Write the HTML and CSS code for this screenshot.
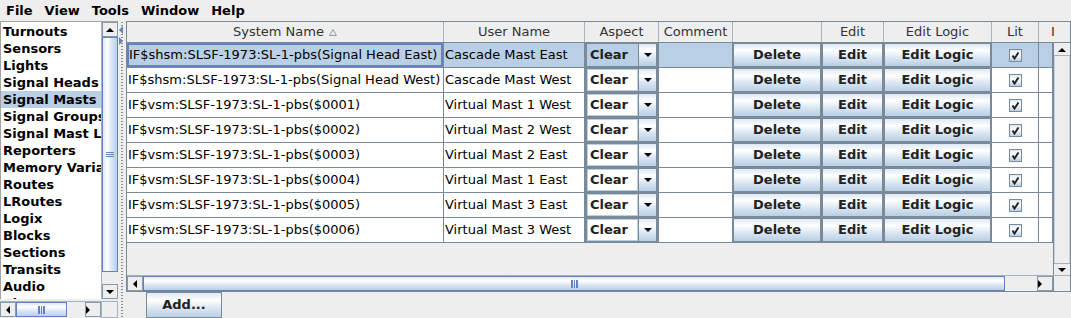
FILE: index.html
```html
<!DOCTYPE html>
<html>
<head>
<meta charset="utf-8">
<link rel="stylesheet" href="styles.css">
</head>
<body>
<div class="menubar">
  <span class="menu m-file">File</span>
  <span class="menu">View</span>
  <span class="menu">Tools</span>
  <span class="menu">Window</span>
  <span class="menu">Help</span>
</div>
<div class="main">
  <div class="left">
    <div class="left-top">
      <div class="list">
        <div class="item">Turnouts</div>
        <div class="item">Sensors</div>
        <div class="item">Lights</div>
        <div class="item">Signal Heads</div>
        <div class="item sel">Signal Masts</div>
        <div class="item">Signal Groups</div>
        <div class="item">Signal Mast Logic</div>
        <div class="item">Reporters</div>
        <div class="item">Memory Variables</div>
        <div class="item">Routes</div>
        <div class="item">LRoutes</div>
        <div class="item">Logix</div>
        <div class="item">Blocks</div>
        <div class="item">Sections</div>
        <div class="item">Transits</div>
        <div class="item">Audio</div>
        <div class="item">IdTags</div>
      </div>
      <div class="vbar">
        <div class="arrbtn"><span class="tri up"></span></div>
        <div class="vthumb"><span class="grip-h"></span></div>
        <div class="vtrack"></div>
        <div class="arrbtn"><span class="tri down"></span></div>
      </div>
    </div>
    <div class="left-bottom">
      <div class="hbar small">
        <div class="arrbtn h"><span class="tri left"></span></div>
        <div class="hthumb w50"><span class="grip-v"></span></div>
        <div class="htrack"></div>
        <div class="arrbtn h"><span class="tri right"></span></div>
      </div>
      <div class="corner"></div>
    </div>
  </div>
  <div class="splitter">
    <span class="sp-arrow sp-left"></span>
    <span class="sp-arrow sp-right"></span>
  </div>
  <div class="right">
    <div class="pane">
      <div class="hdr">
        <div class="hc">System Name <svg class="sort" width="8" height="7" viewBox="0 0 8 7"><path d="M4 0.5 L7.5 6.5 L0.5 6.5 Z" fill="none" stroke="#9a9a9a" stroke-width="1"/></svg></div>
        <div class="hc">User Name</div>
        <div class="hc">Aspect</div>
        <div class="hc">Comment</div>
        <div class="hc"></div>
        <div class="hc">Edit</div>
        <div class="hc">Edit Logic</div>
        <div class="hc">Lit</div>
        <div class="hc last">I</div>
      </div>
      <div class="mid">
        <div class="viewport">
          <div class="row selrow">
            <div class="c t focus">IF$shsm:SLSF-1973:SL-1-pbs(Signal Head East)</div>
            <div class="c t">Cascade Mast East</div>
            <div class="c"><div class="combo"><div class="ctext">Clear</div><div class="cbtn"><span class="tri down"></span></div></div></div>
            <div class="c"></div>
            <div class="c"><div class="btn">Delete</div></div>
            <div class="c"><div class="btn">Edit</div></div>
            <div class="c"><div class="btn">Edit Logic</div></div>
            <div class="c ck"><span class="box"><svg width="9" height="9" viewBox="0 0 9 9"><path d="M1.5 4.5 L3.5 7.5 L7.5 1.5" fill="none" stroke="#222" stroke-width="2"/></svg></span></div>
            <div class="c"></div>
          </div>
          <div class="row">
            <div class="c t">IF$shsm:SLSF-1973:SL-1-pbs(Signal Head West)</div>
            <div class="c t">Cascade Mast West</div>
            <div class="c"><div class="combo"><div class="ctext">Clear</div><div class="cbtn"><span class="tri down"></span></div></div></div>
            <div class="c"></div>
            <div class="c"><div class="btn">Delete</div></div>
            <div class="c"><div class="btn">Edit</div></div>
            <div class="c"><div class="btn">Edit Logic</div></div>
            <div class="c ck"><span class="box"><svg width="9" height="9" viewBox="0 0 9 9"><path d="M1.5 4.5 L3.5 7.5 L7.5 1.5" fill="none" stroke="#222" stroke-width="2"/></svg></span></div>
            <div class="c"></div>
          </div>
          <div class="row">
            <div class="c t">IF$vsm:SLSF-1973:SL-1-pbs($0001)</div>
            <div class="c t">Virtual Mast 1 West</div>
            <div class="c"><div class="combo"><div class="ctext">Clear</div><div class="cbtn"><span class="tri down"></span></div></div></div>
            <div class="c"></div>
            <div class="c"><div class="btn">Delete</div></div>
            <div class="c"><div class="btn">Edit</div></div>
            <div class="c"><div class="btn">Edit Logic</div></div>
            <div class="c ck"><span class="box"><svg width="9" height="9" viewBox="0 0 9 9"><path d="M1.5 4.5 L3.5 7.5 L7.5 1.5" fill="none" stroke="#222" stroke-width="2"/></svg></span></div>
            <div class="c"></div>
          </div>
          <div class="row">
            <div class="c t">IF$vsm:SLSF-1973:SL-1-pbs($0002)</div>
            <div class="c t">Virtual Mast 2 West</div>
            <div class="c"><div class="combo"><div class="ctext">Clear</div><div class="cbtn"><span class="tri down"></span></div></div></div>
            <div class="c"></div>
            <div class="c"><div class="btn">Delete</div></div>
            <div class="c"><div class="btn">Edit</div></div>
            <div class="c"><div class="btn">Edit Logic</div></div>
            <div class="c ck"><span class="box"><svg width="9" height="9" viewBox="0 0 9 9"><path d="M1.5 4.5 L3.5 7.5 L7.5 1.5" fill="none" stroke="#222" stroke-width="2"/></svg></span></div>
            <div class="c"></div>
          </div>
          <div class="row">
            <div class="c t">IF$vsm:SLSF-1973:SL-1-pbs($0003)</div>
            <div class="c t">Virtual Mast 2 East</div>
            <div class="c"><div class="combo"><div class="ctext">Clear</div><div class="cbtn"><span class="tri down"></span></div></div></div>
            <div class="c"></div>
            <div class="c"><div class="btn">Delete</div></div>
            <div class="c"><div class="btn">Edit</div></div>
            <div class="c"><div class="btn">Edit Logic</div></div>
            <div class="c ck"><span class="box"><svg width="9" height="9" viewBox="0 0 9 9"><path d="M1.5 4.5 L3.5 7.5 L7.5 1.5" fill="none" stroke="#222" stroke-width="2"/></svg></span></div>
            <div class="c"></div>
          </div>
          <div class="row">
            <div class="c t">IF$vsm:SLSF-1973:SL-1-pbs($0004)</div>
            <div class="c t">Virtual Mast 1 East</div>
            <div class="c"><div class="combo"><div class="ctext">Clear</div><div class="cbtn"><span class="tri down"></span></div></div></div>
            <div class="c"></div>
            <div class="c"><div class="btn">Delete</div></div>
            <div class="c"><div class="btn">Edit</div></div>
            <div class="c"><div class="btn">Edit Logic</div></div>
            <div class="c ck"><span class="box"><svg width="9" height="9" viewBox="0 0 9 9"><path d="M1.5 4.5 L3.5 7.5 L7.5 1.5" fill="none" stroke="#222" stroke-width="2"/></svg></span></div>
            <div class="c"></div>
          </div>
          <div class="row">
            <div class="c t">IF$vsm:SLSF-1973:SL-1-pbs($0005)</div>
            <div class="c t">Virtual Mast 3 East</div>
            <div class="c"><div class="combo"><div class="ctext">Clear</div><div class="cbtn"><span class="tri down"></span></div></div></div>
            <div class="c"></div>
            <div class="c"><div class="btn">Delete</div></div>
            <div class="c"><div class="btn">Edit</div></div>
            <div class="c"><div class="btn">Edit Logic</div></div>
            <div class="c ck"><span class="box"><svg width="9" height="9" viewBox="0 0 9 9"><path d="M1.5 4.5 L3.5 7.5 L7.5 1.5" fill="none" stroke="#222" stroke-width="2"/></svg></span></div>
            <div class="c"></div>
          </div>
          <div class="row">
            <div class="c t">IF$vsm:SLSF-1973:SL-1-pbs($0006)</div>
            <div class="c t">Virtual Mast 3 West</div>
            <div class="c"><div class="combo"><div class="ctext">Clear</div><div class="cbtn"><span class="tri down"></span></div></div></div>
            <div class="c"></div>
            <div class="c"><div class="btn">Delete</div></div>
            <div class="c"><div class="btn">Edit</div></div>
            <div class="c"><div class="btn">Edit Logic</div></div>
            <div class="c ck"><span class="box"><svg width="9" height="9" viewBox="0 0 9 9"><path d="M1.5 4.5 L3.5 7.5 L7.5 1.5" fill="none" stroke="#222" stroke-width="2"/></svg></span></div>
            <div class="c"></div>
          </div>
        </div>
        <div class="vbar tbl">
          <div class="arrbtn"><span class="tri up"></span></div>
          <div class="vtrack"></div>
          <div class="arrbtn"><span class="tri down"></span></div>
        </div>
      </div>
      <div class="hrow">
        <div class="hbar big">
          <div class="arrbtn h"><span class="tri left"></span></div>
          <div class="hthumb wbig"><span class="grip-v"></span></div>
          <div class="htrack"></div>
          <div class="arrbtn h"><span class="tri right"></span></div>
        </div>
        <div class="corner tcorner"></div>
      </div>
    </div>
    <div class="actions">
      <div class="btn add">Add...</div>
    </div>
  </div>
</div>
</body>
</html>
```

FILE: styles.css
```css
html, body {
  margin: 0;
  padding: 0;
  background: #eeeeee;
  font-family: "DejaVu Sans", sans-serif;
  font-size: 13px;
  color: #000;
  overflow: hidden;
}
body { width: 1071px; height: 318px; }

.menubar {
  height: 21px;
  display: flex;
  align-items: center;
  font-weight: bold;
  padding-left: 6px;
  gap: 12px;
  box-sizing: border-box;
}
.menu { line-height: 19px; }

.main {
  display: flex;
  height: 297px;
}

.left {
  width: 118px;
  display: flex;
  flex-direction: column;
  border-top: 1px solid #a3a3a3;
  box-sizing: border-box;
}
.left-top {
  display: flex;
  height: 277px;
}
.list {
  width: 101px;
  background: #fff;
  overflow: hidden;
  white-space: nowrap;
  padding-top: 1px;
  border-left: 1px solid #a3a3a3;
  box-sizing: border-box;
}
.item {
  height: 17px;
  line-height: 17px;
  font-weight: bold;
  padding-left: 2px;
  overflow: hidden;
}
.item.sel { background: #b8cfe5; }

.vbar {
  width: 17px;
  display: flex;
  flex-direction: column;
  background: #eeeeee;
  border-left: 1px solid #a3b3c3;
  box-sizing: border-box;
}
.arrbtn {
  height: 15px;
  flex: none;
  display: flex;
  align-items: center;
  justify-content: center;
  border: 1px solid #8a99a8;
  box-sizing: border-box;
  background: #eeeeee;
}
.arrbtn.h { width: 16px; height: 100%; }
.vthumb {
  height: 235px;
  flex: none;
  border: 1px solid #6382bf;
  box-sizing: border-box;
  background: linear-gradient(to right, #dde8f3 0%, #ffffff 30%, #dde8f3 60%, #b8cfe5 100%);
  display: flex;
  align-items: center;
  justify-content: center;
}
.vtrack { flex: 1; background: #eeeeee; }
.tbl .vtrack { border-left: 1px solid #c8d0d8; border-right: 1px solid #c8d0d8; }
.grip-h {
  width: 8px;
  height: 5px;
  border-top: 1px solid #6382bf;
  border-bottom: 1px solid #6382bf;
  position: relative;
  box-sizing: border-box;
  background: linear-gradient(to bottom, transparent 40%, #6382bf 40%, #6382bf 60%, transparent 60%);
}
.grip-v {
  width: 7px;
  height: 8px;
  box-sizing: border-box;
  border-left: 2px solid #6382bf;
  border-right: 2px solid #6382bf;
  background: linear-gradient(to right, transparent 28%, #6382bf 28%, #6382bf 55%, transparent 55%);
}

.tri { width: 0; height: 0; display: block; }
.tri.up { border-left: 4px solid transparent; border-right: 4px solid transparent; border-bottom: 4px solid #000; }
.tri.down { border-left: 4px solid transparent; border-right: 4px solid transparent; border-top: 4px solid #000; }
.tri.left { border-top: 4px solid transparent; border-bottom: 4px solid transparent; border-right: 4px solid #000; }
.tri.right { border-top: 4px solid transparent; border-bottom: 4px solid transparent; border-left: 4px solid #000; }

.left-bottom {
  display: flex;
  height: 17px;
  margin-top: 2px;
}
.hbar {
  display: flex;
  height: 16px;
  background: #eeeeee;
  border-top: 1px solid #a3b3c3;
  box-sizing: border-box;
}
.hbar.small { width: 101px; }
.hthumb {
  flex: none;
  height: 100%;
  border: 1px solid #6382bf;
  box-sizing: border-box;
  background: linear-gradient(to bottom, #dde8f3 0%, #ffffff 30%, #dde8f3 60%, #b8cfe5 100%);
  display: flex;
  align-items: center;
  justify-content: center;
}
.hthumb.w50 { width: 51px; }
.htrack { flex: 1; }
.corner {
  width: 17px;
  border: 1px solid #a3b3c3;
  box-sizing: border-box;
}

.splitter {
  width: 8px;
  position: relative;
  background-image: radial-gradient(circle, #8c8c8c 0.6px, transparent 0.8px);
  background-size: 2px 3px;
  background-repeat: repeat-y;
  background-position: 3px 0;
}
.sp-arrow { position: absolute; width: 0; height: 0; left: 1px; }
.sp-left { top: 5px; border-top: 4px solid transparent; border-bottom: 4px solid transparent; border-right: 4px solid #6382bf; }
.sp-right { top: 16px; border-top: 4px solid transparent; border-bottom: 4px solid transparent; border-left: 4px solid #6382bf; }

.right {
  width: 945px;
  display: flex;
  flex-direction: column;
}
.pane {
  height: 271px;
  border: 1px solid #7a8a99;
  box-sizing: border-box;
  display: flex;
  flex-direction: column;
}
.hdr, .row {
  display: grid;
  grid-template-columns: 317px 141px 74px 74px 89px 62px 108px 47px 14px;
}
.hdr {
  grid-template-columns: 317px 141px 74px 74px 89px 62px 108px 47px 31px;
  height: 20px;
  border-bottom: 1px solid #7a8a99;
  box-sizing: content-box;
}
.hc {
  border-right: 1px solid #a8b4c0;
  text-align: center;
  line-height: 20px;
  color: #333;
  white-space: nowrap;
  overflow: hidden;
  box-sizing: border-box;
  background: #eeeeee;
}
.hc.last { border-right: none; text-align: left; padding-left: 12px; }
.sort { vertical-align: 0px; margin-left: 1px; }

.mid {
  display: flex;
  height: 233px;
}
.viewport {
  width: 926px;
  overflow: hidden;
}
.row { height: 25px; background: #fff; }
.selrow, .selrow .ctext { background: #b8cfe5; }
.c {
  border-right: 1px solid #7a8a99;
  border-bottom: 1px solid #7a8a99;
  box-sizing: border-box;
  overflow: hidden;
  white-space: nowrap;
}
.c.t { line-height: 24px; padding-left: 1px; }
.c.focus { box-shadow: inset 0 0 0 2px #6382bf; padding-left: 2px; }

.btn {
  height: 100%;
  border: 1px solid #7a8a99;
  box-sizing: border-box;
  background: linear-gradient(to bottom, #dde8f3 0%, #ffffff 30%, #dde8f3 60%, #b8cfe5 100%);
  font-weight: bold;
  text-align: center;
  line-height: 22px;
  color: #222;
}

.combo {
  display: flex;
  height: 100%;
  border: 1px solid #7a8a99;
  border-left-width: 2px;
  border-right-width: 2px;
  box-sizing: border-box;
}
.ctext {
  flex: 1;
  background: #fff;
  border: 1px solid #b8cfe5;
  font-weight: bold;
  line-height: 20px;
  padding-left: 2px;
  color: #222;
}
.cbtn {
  width: 17px;
  border-left: 1px solid #7a8a99;
  background: linear-gradient(to bottom, #dde8f3 0%, #ffffff 30%, #dde8f3 60%, #b8cfe5 100%);
  display: flex;
  align-items: center;
  justify-content: center;
}

.ck { display: flex; align-items: center; justify-content: center; }
.box {
  width: 13px;
  height: 13px;
  border: 1px solid #7a8a99;
  box-sizing: border-box;
  background: linear-gradient(to bottom, #dde8f3 0%, #ffffff 40%, #dde8f3 70%, #b8cfe5 100%);
  display: flex;
  align-items: center;
  justify-content: center;
}

.vbar.tbl {
  width: 17px;
  border-left: 1px solid #7a8a99;
  padding-top: 1px;
}
.vbar.tbl .arrbtn { height: 12px; border: none; border-bottom: 1px solid #a3b3c3; }
.vbar.tbl .arrbtn:last-child { border-bottom: none; border-top: 1px solid #a3b3c3; }

.hrow {
  display: flex;
  height: 16px;
  border-top: 1px solid #a3b3c3;
  box-sizing: border-box;
}
.hbar.big { width: 926px; border-top: none; height: 15px; }
.hthumb.wbig { width: 862px; }
.tcorner { border: none; border-left: 1px solid #7a8a99; }

.actions {
  display: flex;
  padding-left: 20px;
}
.btn.add {
  width: 76px;
  height: 26px;
  line-height: 24px;
}
```
